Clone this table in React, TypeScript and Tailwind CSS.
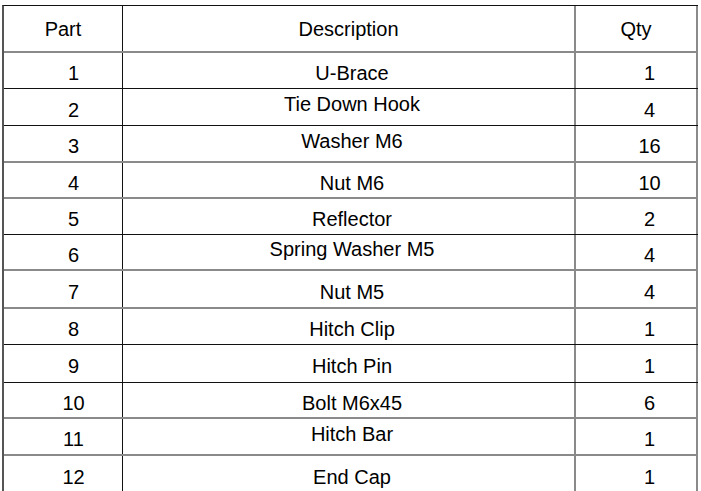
const rows: { p: string; d: string; q: string; h: string; line: "b" | "g" | "n"; up?: boolean }[] = [
  { p: "1", d: "U-Brace", q: "1", h: "h-[36px]", line: "b" },
  { p: "2", d: "Tie Down Hook", q: "4", h: "h-[37px]", line: "b", up: true },
  { p: "3", d: "Washer M6", q: "16", h: "h-[37px]", line: "g", up: true },
  { p: "4", d: "Nut M6", q: "10", h: "h-[36px]", line: "g" },
  { p: "5", d: "Reflector", q: "2", h: "h-[36px]", line: "b" },
  { p: "6", d: "Spring Washer M5", q: "4", h: "h-[36px]", line: "g", up: true },
  { p: "7", d: "Nut M5", q: "4", h: "h-[38px]", line: "g" },
  { p: "8", d: "Hitch Clip", q: "1", h: "h-[36px]", line: "b" },
  { p: "9", d: "Hitch Pin", q: "1", h: "h-[38px]", line: "b" },
  { p: "10", d: "Bolt M6x45", q: "6", h: "h-[36px]", line: "g" },
  { p: "11", d: "Hitch Bar", q: "1", h: "h-[37px]", line: "g", up: true },
  { p: "12", d: "End Cap", q: "1", h: "h-[36px]", line: "n" },
];

export default function App() {
  return (
    <div
      className="w-[701px] h-[491px] overflow-hidden bg-white text-black text-[20px] leading-none"
      style={{ fontFamily: '"Liberation Sans", Arial, sans-serif' }}
    >
      <div className="pt-[5px] pl-[2px]">
        <div className="w-[696px] border-l-2 border-l-[#555] border-t border-t-[#111]">
          <div className="flex h-[47px] border-b-2 border-b-[#8a8a8a]">
            <div className="w-[119px] border-r border-r-[#111] flex items-center justify-center">Part</div>
            <div className="w-[453px] border-r-2 border-r-[#8a8a8a] flex items-center justify-center">Description</div>
            <div className="w-[122px] border-r-2 border-r-[#8a8a8a] flex items-center justify-center">Qty</div>
          </div>
          {rows.map((r) => (
            <div
              key={r.p}
              className={
                "flex " +
                r.h +
                " " +
                (r.line === "b"
                  ? "border-b border-b-[#111]"
                  : r.line === "g"
                  ? "border-b-2 border-b-[#8a8a8a]"
                  : "")
              }
            >
              <div className="w-[119px] border-r border-r-[#111] flex items-center justify-center pl-[21px] pt-[5px]">
                {r.p}
              </div>
              <div
                className={
                  "w-[453px] border-r-2 border-r-[#8a8a8a] flex items-center justify-center pl-[7px] " +
                  (r.up ? "pb-[6px]" : "pt-[5px]")
                }
              >
                {r.d}
              </div>
              <div className="w-[122px] border-r-2 border-r-[#8a8a8a] flex items-center justify-center pl-[27px] pt-[5px]">
                {r.q}
              </div>
            </div>
          ))}
        </div>
      </div>
    </div>
  );
}
